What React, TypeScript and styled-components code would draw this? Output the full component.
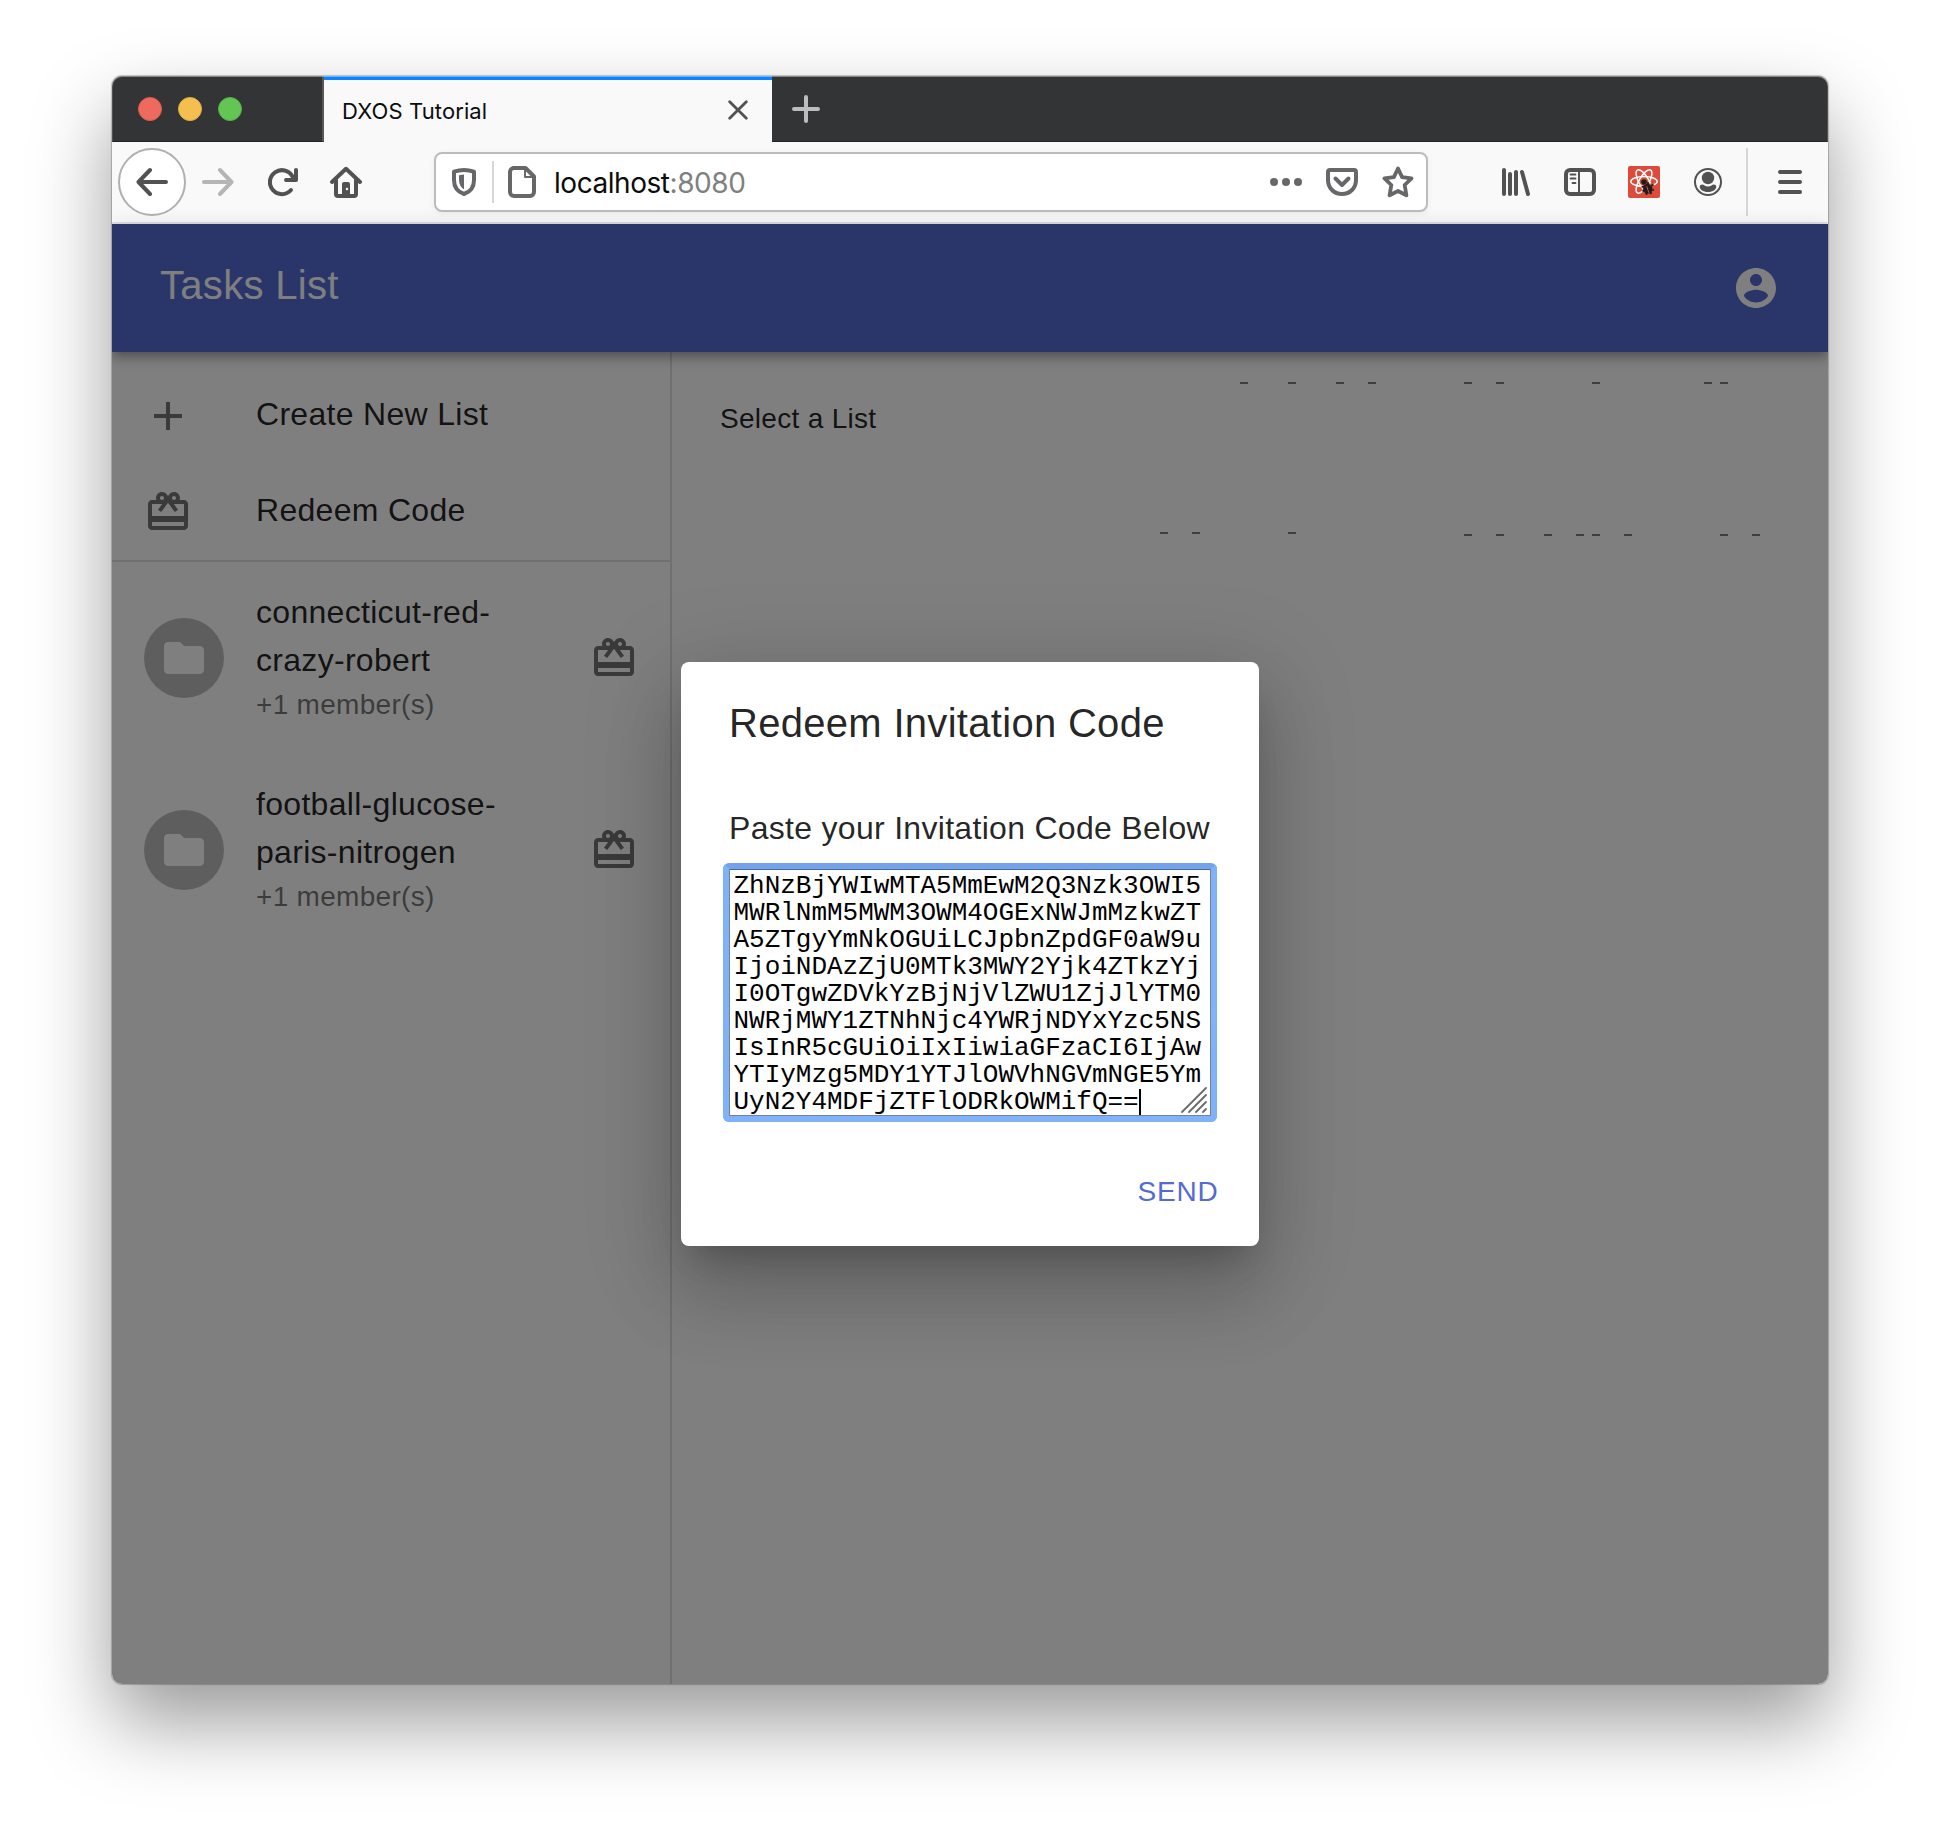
import React from 'react';
import styled, { createGlobalStyle, css } from 'styled-components';

const GlobalStyle = createGlobalStyle`
  *, *::before, *::after { box-sizing: border-box; }
  html, body { margin: 0; padding: 0; background: #fff; }
  body { overflow: hidden; }
`;

const sans = `"Liberation Sans", Helvetica, Arial, sans-serif`;
const system = `Inter, -apple-system, Roboto, sans-serif`;

/* ---------- Browser window ---------- */

const Desktop = styled.div`
  display: flex;
  justify-content: center;
  align-items: flex-start;
  width: 1940px;
  height: 1832px;
  padding-top: 76px;
`;

const BrowserWindow = styled.div`
  position: relative;
  display: flex;
  flex-direction: column;
  width: 1716px;
  height: 1608px;
  border-radius: 10px;
  overflow: hidden;
`;

const WindowShadow = styled.div`
  border-radius: 10px;
  box-shadow: 0 0 1px 1px rgba(0, 0, 0, 0.22), 0 38px 80px rgba(0, 0, 0, 0.4);
`;

const WindowEdge = styled.div`
  position: absolute;
  inset: 0;
  border-radius: 10px;
  box-shadow: inset 0 0 0 1px rgba(255, 255, 255, 0.14), inset 0 1px 0 rgba(255, 255, 255, 0.3);
  pointer-events: none;
`;

const TitleBar = styled.div`
  display: flex;
  height: 66px;
  background: #333436;
`;

const TrafficLights = styled.div`
  display: flex;
  align-items: center;
  gap: 16px;
  width: 212px;
  padding-left: 26px;
  border-right: 2px solid #57585a;
  border-bottom: 1px solid #232425;
`;

const Light = styled.span<{ $fill: string; $edge: string }>`
  width: 24px;
  height: 24px;
  border-radius: 50%;
  background: ${(p) => p.$fill};
  border: 1px solid ${(p) => p.$edge};
`;

const Tab = styled.div`
  display: flex;
  align-items: center;
  justify-content: space-between;
  width: 448px;
  padding: 0 24px 2px 18px;
  background: #f9f9fa;
  border-top: 4px solid #0a84ff;
`;

const TabTitle = styled.span`
  font: 400 22px/30px ${system};
  letter-spacing: 0.1px;
  color: #0c0c0d;
  margin-top: 2px;
`;

const TabStrip = styled.div`
  display: flex;
  flex: 1;
  align-items: center;
  padding-left: 20px;
  border-bottom: 1px solid #232425;
`;

const Toolbar = styled.div`
  display: flex;
  align-items: center;
  height: 82px;
  padding: 0 0 0 6px;
  background: #f9f9fa;
  border-bottom: 2px solid #e0e0e1;
`;

const BackButton = styled.div`
  display: grid;
  place-items: center;
  width: 68px;
  height: 68px;
  border: 2px solid #b0b0b1;
  border-radius: 50%;
  background: #fff;
`;

const NavGroup = styled.div`
  display: flex;
  gap: 32px;
  margin-left: 16px;
`;

const UrlBar = styled.div`
  display: flex;
  align-items: center;
  width: 994px;
  height: 60px;
  margin-left: 72px;
  padding: 0 12px;
  border: 2px solid #bcbcbd;
  border-radius: 8px;
  background: #fff;
  box-shadow: 0 2px 6px rgba(0, 0, 0, 0.06);
`;

const Rule = styled.span<{ $height: number; $start: number; $end: number }>`
  width: 2px;
  height: ${(p) => p.$height}px;
  margin: 0 ${(p) => p.$end}px 0 ${(p) => p.$start}px;
  background: #d7d7d8;
`;

const Url = styled.span`
  flex: 1;
  margin: 2px 0 0 16px;
  font: 400 28px/36px ${system};
  letter-spacing: -0.45px;
  color: #0c0c0d;
`;

const Port = styled.span`
  color: #808081;
`;

const UrlActions = styled.div`
  display: flex;
  gap: 24px;
`;

const ExtensionGroup = styled.div`
  display: flex;
  gap: 32px;
  margin-left: 72px;
`;

/* ---------- Page ---------- */

const Page = styled.div`
  position: relative;
  display: flex;
  flex: 1;
  flex-direction: column;
  background: #fff;
  font-family: ${sans};
  color: rgba(0, 0, 0, 0.87);
`;

const AppBar = styled.header`
  display: flex;
  align-items: center;
  justify-content: space-between;
  height: 128px;
  padding: 0 48px;
  background: #546ad4;
  color: #fff;
  z-index: 1;
  box-shadow: 0 4px 8px -2px rgba(0, 0, 0, 0.2), 0 8px 10px rgba(0, 0, 0, 0.14),
    0 2px 20px rgba(0, 0, 0, 0.12);
`;

const AppTitle = styled.h1`
  margin: 0 0 6px;
  font-size: 40px;
  font-weight: 400;
  line-height: 64px;
  letter-spacing: 0.3px;
`;

const Columns = styled.div`
  display: flex;
  flex: 1;
`;

const Drawer = styled.nav`
  width: 560px;
  border-right: 2px solid rgba(0, 0, 0, 0.12);
`;

const ActionList = styled.div`
  padding-top: 16px;
  border-bottom: 2px solid rgba(0, 0, 0, 0.12);
  height: 210px;
`;

const itemRow = css`
  display: flex;
  align-items: center;
  padding: 0 32px;
`;

const ActionRow = styled.div`
  ${itemRow}
  height: 96px;
`;

const PartyRow = styled.div`
  ${itemRow}
  height: 192px;
`;

const ActionLabel = styled.span`
  margin: 0 0 4px 64px;
  font-size: 32px;
  line-height: 48px;
  letter-spacing: 0.3px;
`;

const Avatar = styled.div`
  display: grid;
  place-items: center;
  width: 80px;
  height: 80px;
  border-radius: 50%;
  background: #bdbdbd;
`;

const PartyText = styled.div`
  width: 302px;
  margin: 0 32px 4px;
`;

const PartyName = styled.div`
  font-size: 32px;
  line-height: 48px;
  letter-spacing: 0.3px;
  width: 270px;
`;

const Members = styled.div`
  padding-top: 1px;
  font-size: 28px;
  line-height: 39px;
  letter-spacing: 0.3px;
  color: rgba(0, 0, 0, 0.54);
`;

const Main = styled.main`
  position: relative;
  flex: 1;
  padding: 47px 48px;
`;

const Hint = styled.p`
  margin: 0;
  font-size: 28px;
  line-height: 40px;
  letter-spacing: 0.3px;
`;

const Marks = styled.svg`
  position: absolute;
  top: 30px;
  left: 488px;
`;

const Backdrop = styled.div`
  position: absolute;
  inset: 0;
  z-index: 2;
  display: flex;
  align-items: center;
  justify-content: center;
  background: rgba(0, 0, 0, 0.5);
`;

/* ---------- Dialog ---------- */

const Dialog = styled.div`
  display: flex;
  flex-direction: column;
  width: 578px;
  height: 584px;
  border-radius: 8px;
  background: #fff;
  box-shadow: 0 22px 30px -14px rgba(0, 0, 0, 0.2), 0 48px 76px 6px rgba(0, 0, 0, 0.14),
    0 18px 92px 16px rgba(0, 0, 0, 0.12);
`;

const DialogTitle = styled.h2`
  margin: 0;
  padding: 29px 48px 35px;
  font-size: 40px;
  font-weight: 400;
  line-height: 64px;
  letter-spacing: 0.3px;
`;

const DialogContent = styled.div`
  padding: 14px 48px 0;
`;

const FieldLabel = styled.div`
  font-size: 32px;
  line-height: 48px;
  letter-spacing: 0.3px;
  white-space: nowrap;
`;

const CodeField = styled.div`
  position: relative;
  height: 247px;
  margin-top: 17px;
  padding: 3px 0 0 3.5px;
  border: 1px solid #75828f;
  border-top-color: #4468a6;
  background: #fff;
  border-radius: 1px;
`;

const FieldRing = styled.span`
  position: absolute;
  inset: -7px;
  border: 6px solid #7fb2f9;
  border-top-color: #73a3e9;
  border-radius: 6px;
`;

const Code = styled.div`
  font: 400 26px/27px "Liberation Mono", "Courier New", monospace;
  letter-spacing: -0.02px;
  color: #000;
  white-space: pre;
`;

const Caret = styled.span`
  display: inline-block;
  width: 2px;
  height: 26px;
  vertical-align: top;
  background: #000;
`;

const Grip = styled.svg`
  position: absolute;
  right: 3px;
  bottom: 2px;
`;

const DialogActions = styled.div`
  display: flex;
  justify-content: flex-end;
  margin-top: auto;
  padding: 16px 17px 16px 16px;
`;

const TextButton = styled.button`
  min-width: 128px;
  height: 73px;
  padding: 0 16px 5px;
  border: 0;
  background: none;
  font: 400 28px/49px ${sans};
  letter-spacing: 0.8px;
  color: #546ad4;
`;

/* ---------- Icons ---------- */

const Glyph = styled.svg`
  display: block;
  flex: none;
  fill: none;
  stroke-width: 4px;
  stroke-linecap: round;
  stroke-linejoin: round;
`;

function Icon({ color = '#525253', children }: { color?: string; children: React.ReactNode }) {
  return (
    <Glyph width="32" height="32" viewBox="0 0 32 32" stroke={color}>
      {children}
    </Glyph>
  );
}

const ICONS = {
  add: 'M19 13h-6v6h-2v-6H5v-2h6V5h2v6h6v2z',
  redeem:
    'M20 6h-2.18c.11-.31.18-.65.18-1 0-1.66-1.34-3-3-3-1.05 0-1.96.54-2.5 1.35l-.5.67-.5-.68C10.96 2.54 10.05 2 9 2 7.34 2 6 3.34 6 5c0 .35.07.69.18 1H4c-1.11 0-1.99.89-1.99 2L2 19c0 1.11.89 2 2 2h16c1.11 0 2-.89 2-2V8c0-1.11-.89-2-2-2zm-5-2c.55 0 1 .45 1 1s-.45 1-1 1-1-.45-1-1 .45-1 1-1zM9 4c.55 0 1 .45 1 1s-.45 1-1 1-1-.45-1-1 .45-1 1-1zm11 15H4v-2h16v2zm0-5H4V8h5.08L7 10.83 8.62 12 11 8.76l1-1.36 1 1.36L15.38 12 17 10.83 14.92 8H20v6z',
  folder:
    'M10 4H4c-1.1 0-1.99.9-1.99 2L2 18c0 1.1.9 2 2 2h16c1.1 0 2-.9 2-2V8c0-1.1-.9-2-2-2h-8l-2-2z',
  account:
    'M12 2C6.48 2 2 6.48 2 12s4.48 10 10 10 10-4.48 10-10S17.52 2 12 2zm0 3c1.66 0 3 1.34 3 3s-1.34 3-3 3-3-1.34-3-3 1.34-3 3-3zm0 14.2c-2.5 0-4.71-1.28-6-3.22.03-1.99 4-3.08 6-3.08 1.99 0 5.97 1.09 6 3.08-1.29 1.94-3.5 3.22-6 3.22z',
};

const MaterialSvg = styled.svg`
  display: block;
  flex: none;
`;

function MaterialIcon({ name, color = 'rgba(0,0,0,0.54)' }: { name: keyof typeof ICONS; color?: string }) {
  return (
    <MaterialSvg width="48" height="48" viewBox="0 0 24 24" fill={color}>
      <path d={ICONS[name]} />
    </MaterialSvg>
  );
}

const ThinPath = styled.path<{ $width: number }>`
  stroke-width: ${(p) => p.$width}px;
`;

const ThinGroup = styled.g<{ $width: number }>`
  stroke-width: ${(p) => p.$width}px;
`;

/* ---------- Data ---------- */

const parties = [
  { name: 'connecticut-red-crazy-robert', members: 1 },
  { name: 'football-glucose-paris-nitrogen', members: 1 },
];

const code = [
  'ZhNzBjYWIwMTA5MmEwM2Q3Nzk3OWI5',
  'MWRlNmM5MWM3OWM4OGExNWJmMzkwZT',
  'A5ZTgyYmNkOGUiLCJpbnZpdGF0aW9u',
  'IjoiNDAzZjU0MTk3MWY2Yjk4ZTkzYj',
  'I0OTgwZDVkYzBjNjVlZWU1ZjJlYTM0',
  'NWRjMWY1ZTNhNjc4YWRjNDYxYzc5NS',
  'IsInR5cGUiOiIxIiwiaGFzaCI6IjAw',
  'YTIyMzg5MDY1YTJlOWVhNGVmNGE5Ym',
  'UyN2Y4MDFjZTFlODRkOWMifQ==',
].join('\n');

const marks: { y: number; xs: number[] }[] = [
  { y: 0, xs: [80, 128, 176, 208, 304, 336, 432, 544, 560] },
  { y: 150, xs: [0, 32, 128] },
  { y: 152, xs: [304, 336, 384, 416, 432, 464, 560, 592] },
];

function Chrome() {
  return (
    <>
      <TitleBar>
        <TrafficLights>
          <Light $fill="#ee6a5f" $edge="#df5a4e" />
          <Light $fill="#f5bf4f" $edge="#e0ad43" />
          <Light $fill="#62c554" $edge="#54b046" />
        </TrafficLights>
        <Tab>
          <TabTitle>DXOS Tutorial</TabTitle>
          <Glyph width="20" height="20" viewBox="0 0 20 20" stroke="#525253">
            <ThinPath $width={2.8} d="M1.700 1.700l16.600 16.600M18.300 1.700L1.700 18.300" />
          </Glyph>
        </Tab>
        <TabStrip>
          <Glyph width="28" height="28" viewBox="0 0 28 28" stroke="#bdbdbe">
            <path d="M14 2v24M2 14h24" />
          </Glyph>
        </TabStrip>
      </TitleBar>
      <Toolbar>
        <BackButton>
          <Icon>
            <path d="M14 4L2.500 16 14 28M3 16h27" />
          </Icon>
        </BackButton>
        <NavGroup>
          <Icon color="#b5b5b6">
            <path d="M18 4l11.500 12L18 28M29 16H2" />
          </Icon>
          <Icon>
            <path d="M25 24A12 12 0 1 1 26.500 10.500" />
            <path d="M30 4v10H20" />
          </Icon>
          <Icon>
            <path d="M2 16L16 2.800 30 16" />
            <path d="M6 14v14a2 2 0 0 0 2 2h16a2 2 0 0 0 2-2V14" />
            <path d="M12 30V18a2 2 0 0 1 2-2h4a2 2 0 0 1 2 2v12z" fill="#525253" stroke="none" />
            <circle cx="17" cy="23" r="1.200" fill="#f9f9fa" stroke="none" />
          </Icon>
        </NavGroup>
        <UrlBar>
          <Icon color="#67676a">
            <path d="M16 4c-4 0-7 .7-10 1.700V14c0 7 4 12 10 14 6-2 10-7 10-14V5.700C23 4.700 20 4 16 4z" />
            <path d="M16 8.500v15c-3-2-5-5-5-9.500V9.300z" fill="#67676a" stroke="none" />
          </Icon>
          <Rule $height={42} $start={12} $end={12} />
          <Icon color="#67676a">
            <path d="M7 2h12.500L28 10.500V26a4 4 0 0 1-4 4H8a4 4 0 0 1-4-4V6a4 4 0 0 1 4-4z" />
            <ThinPath $width={2} d="M19 3v8h8" />
          </Icon>
          <Url>
            localhost<Port>:8080</Port>
          </Url>
          <UrlActions>
            <Icon>
              <g fill="#67676a" stroke="none">
                <circle cx="4" cy="16" r="4" />
                <circle cx="16" cy="16" r="4" />
                <circle cx="28" cy="16" r="4" />
              </g>
            </Icon>
            <Icon color="#67676a">
              <path d="M4 4h24a2 2 0 0 1 2 2v8c0 8-6 14-14 14S2 22 2 14V6a2 2 0 0 1 2-2z" />
              <path d="M9.500 12.500L16 19l6.500-6.500" />
            </Icon>
            <Icon color="#67676a">
              <ThinPath
                $width={3.8}
                d="M16 2.500l4.100 8.600 9.400 1.300-6.800 6.600 1.700 10.300L16 25l-8.400 4.300L9.300 19 2.500 12.400l9.400-1.300z"
              />
            </Icon>
          </UrlActions>
        </UrlBar>
        <ExtensionGroup>
          <Icon>
            <path d="M4 4v24M10 8v20M16 6v22M22 6l6 22" />
          </Icon>
          <Icon>
            <rect x="2" y="4" width="28" height="24" rx="4" />
            <ThinPath $width={2} d="M15 5v22" />
            <ThinPath $width={1.8} d="M6.500 8.500h5M6.500 12.500h5M8.500 17h3" />
          </Icon>
          <Icon>
            <rect width="32" height="32" rx="2" fill="#de4b3a" stroke="none" />
            <ThinGroup $width={1.5} stroke="#fff">
              <ellipse cx="16" cy="15.500" rx="13.200" ry="5" />
              <ellipse cx="16" cy="15.500" rx="13.200" ry="5" transform="rotate(60 16 15.500)" />
              <ellipse cx="16" cy="15.500" rx="13.200" ry="5" transform="rotate(120 16 15.500)" />
            </ThinGroup>
            <path d="M14.500 20.500l4-3h6l2 4-1.500 8h-9z" fill="#de4b3a" stroke="none" />
            <ThinGroup $width={1.6} stroke="#1d1d1d" strokeLinecap="butt">
              <circle cx="16" cy="16" r="2.800" fill="#1d1d1d" stroke="none" />
              <path d="M15 20l5-3 4.500 4.500L23.500 27 18 28l-2.500-3z" fill="#1d1d1d" stroke="none" />
              <path d="M16 20.500l-2.500.5M16.500 24l-2 1.500M18.500 26.500V29M20 18.500V16M23 20l2.500-1.500M24 24h2M22.500 26.500l1 1.500" />
            </ThinGroup>
            <ThinPath $width={1} d="M18.800 20.500l2 6" stroke="#de4b3a" />
          </Icon>
          <Icon>
            <ThinGroup $width={2}>
              <circle cx="16" cy="16" r="13" />
            </ThinGroup>
            <circle cx="16" cy="12" r="6.200" fill="#525253" stroke="none" />
            <path
              d="M8 19.500c1.500-1.300 3-1.300 4.500 0 2 1.300 5 1.300 7 0 1.500-1.300 3-1.300 4.500 0C25.500 23.500 20.500 26 16 26s-9.500-2.500-8-6.500z"
              fill="#525253"
              stroke="none"
            />
          </Icon>
        </ExtensionGroup>
        <Rule $height={68} $start={22} $end={26} />
        <Icon>
          <path d="M6 6h20M6 16h20M6 26h20" />
        </Icon>
      </Toolbar>
    </>
  );
}

function InvitationDialog() {
  return (
    <Dialog role="dialog">
      <DialogTitle>Redeem Invitation Code</DialogTitle>
      <DialogContent>
        <FieldLabel>Paste your Invitation Code Below</FieldLabel>
        <CodeField>
          <FieldRing />
          <Code>
            {code}
            <Caret />
          </Code>
          <Grip width="26" height="26" viewBox="0 0 26 26" stroke="#6a6a6a" strokeWidth="1.800" strokeLinecap="round">
            <path d="M1 25L25 1M8 25L25 8M15 25l10-10M22 25l3-3" />
          </Grip>
        </CodeField>
      </DialogContent>
      <DialogActions>
        <TextButton>SEND</TextButton>
      </DialogActions>
    </Dialog>
  );
}

export default function App() {
  return (
    <>
      <GlobalStyle />
      <Desktop>
        <WindowShadow>
          <BrowserWindow>
            <Chrome />
            <Page>
              <AppBar>
                <AppTitle>Tasks List</AppTitle>
                <MaterialIcon name="account" color="#fff" />
              </AppBar>
              <Columns>
                <Drawer>
                  <ActionList>
                    <ActionRow>
                      <MaterialIcon name="add" />
                      <ActionLabel>Create New List</ActionLabel>
                    </ActionRow>
                    <ActionRow>
                      <MaterialIcon name="redeem" />
                      <ActionLabel>Redeem Code</ActionLabel>
                    </ActionRow>
                  </ActionList>
                  {parties.map((party) => (
                    <PartyRow key={party.name}>
                      <Avatar>
                        <MaterialIcon name="folder" color="#fff" />
                      </Avatar>
                      <PartyText>
                        <PartyName>{party.name}</PartyName>
                        <Members>+{party.members} member(s)</Members>
                      </PartyText>
                      <MaterialIcon name="redeem" />
                    </PartyRow>
                  ))}
                </Drawer>
                <Main>
                  <Hint>Select a List</Hint>
                  <Marks width="600" height="154" fill="rgba(0,0,0,0.5)">
                    {marks.map((row) =>
                      row.xs.map((x) => <rect key={`${row.y}-${x}`} x={x} y={row.y} width="8" height="2" />)
                    )}
                  </Marks>
                </Main>
              </Columns>
              <Backdrop>
                <InvitationDialog />
              </Backdrop>
            </Page>
            <WindowEdge />
          </BrowserWindow>
        </WindowShadow>
      </Desktop>
    </>
  );
}
